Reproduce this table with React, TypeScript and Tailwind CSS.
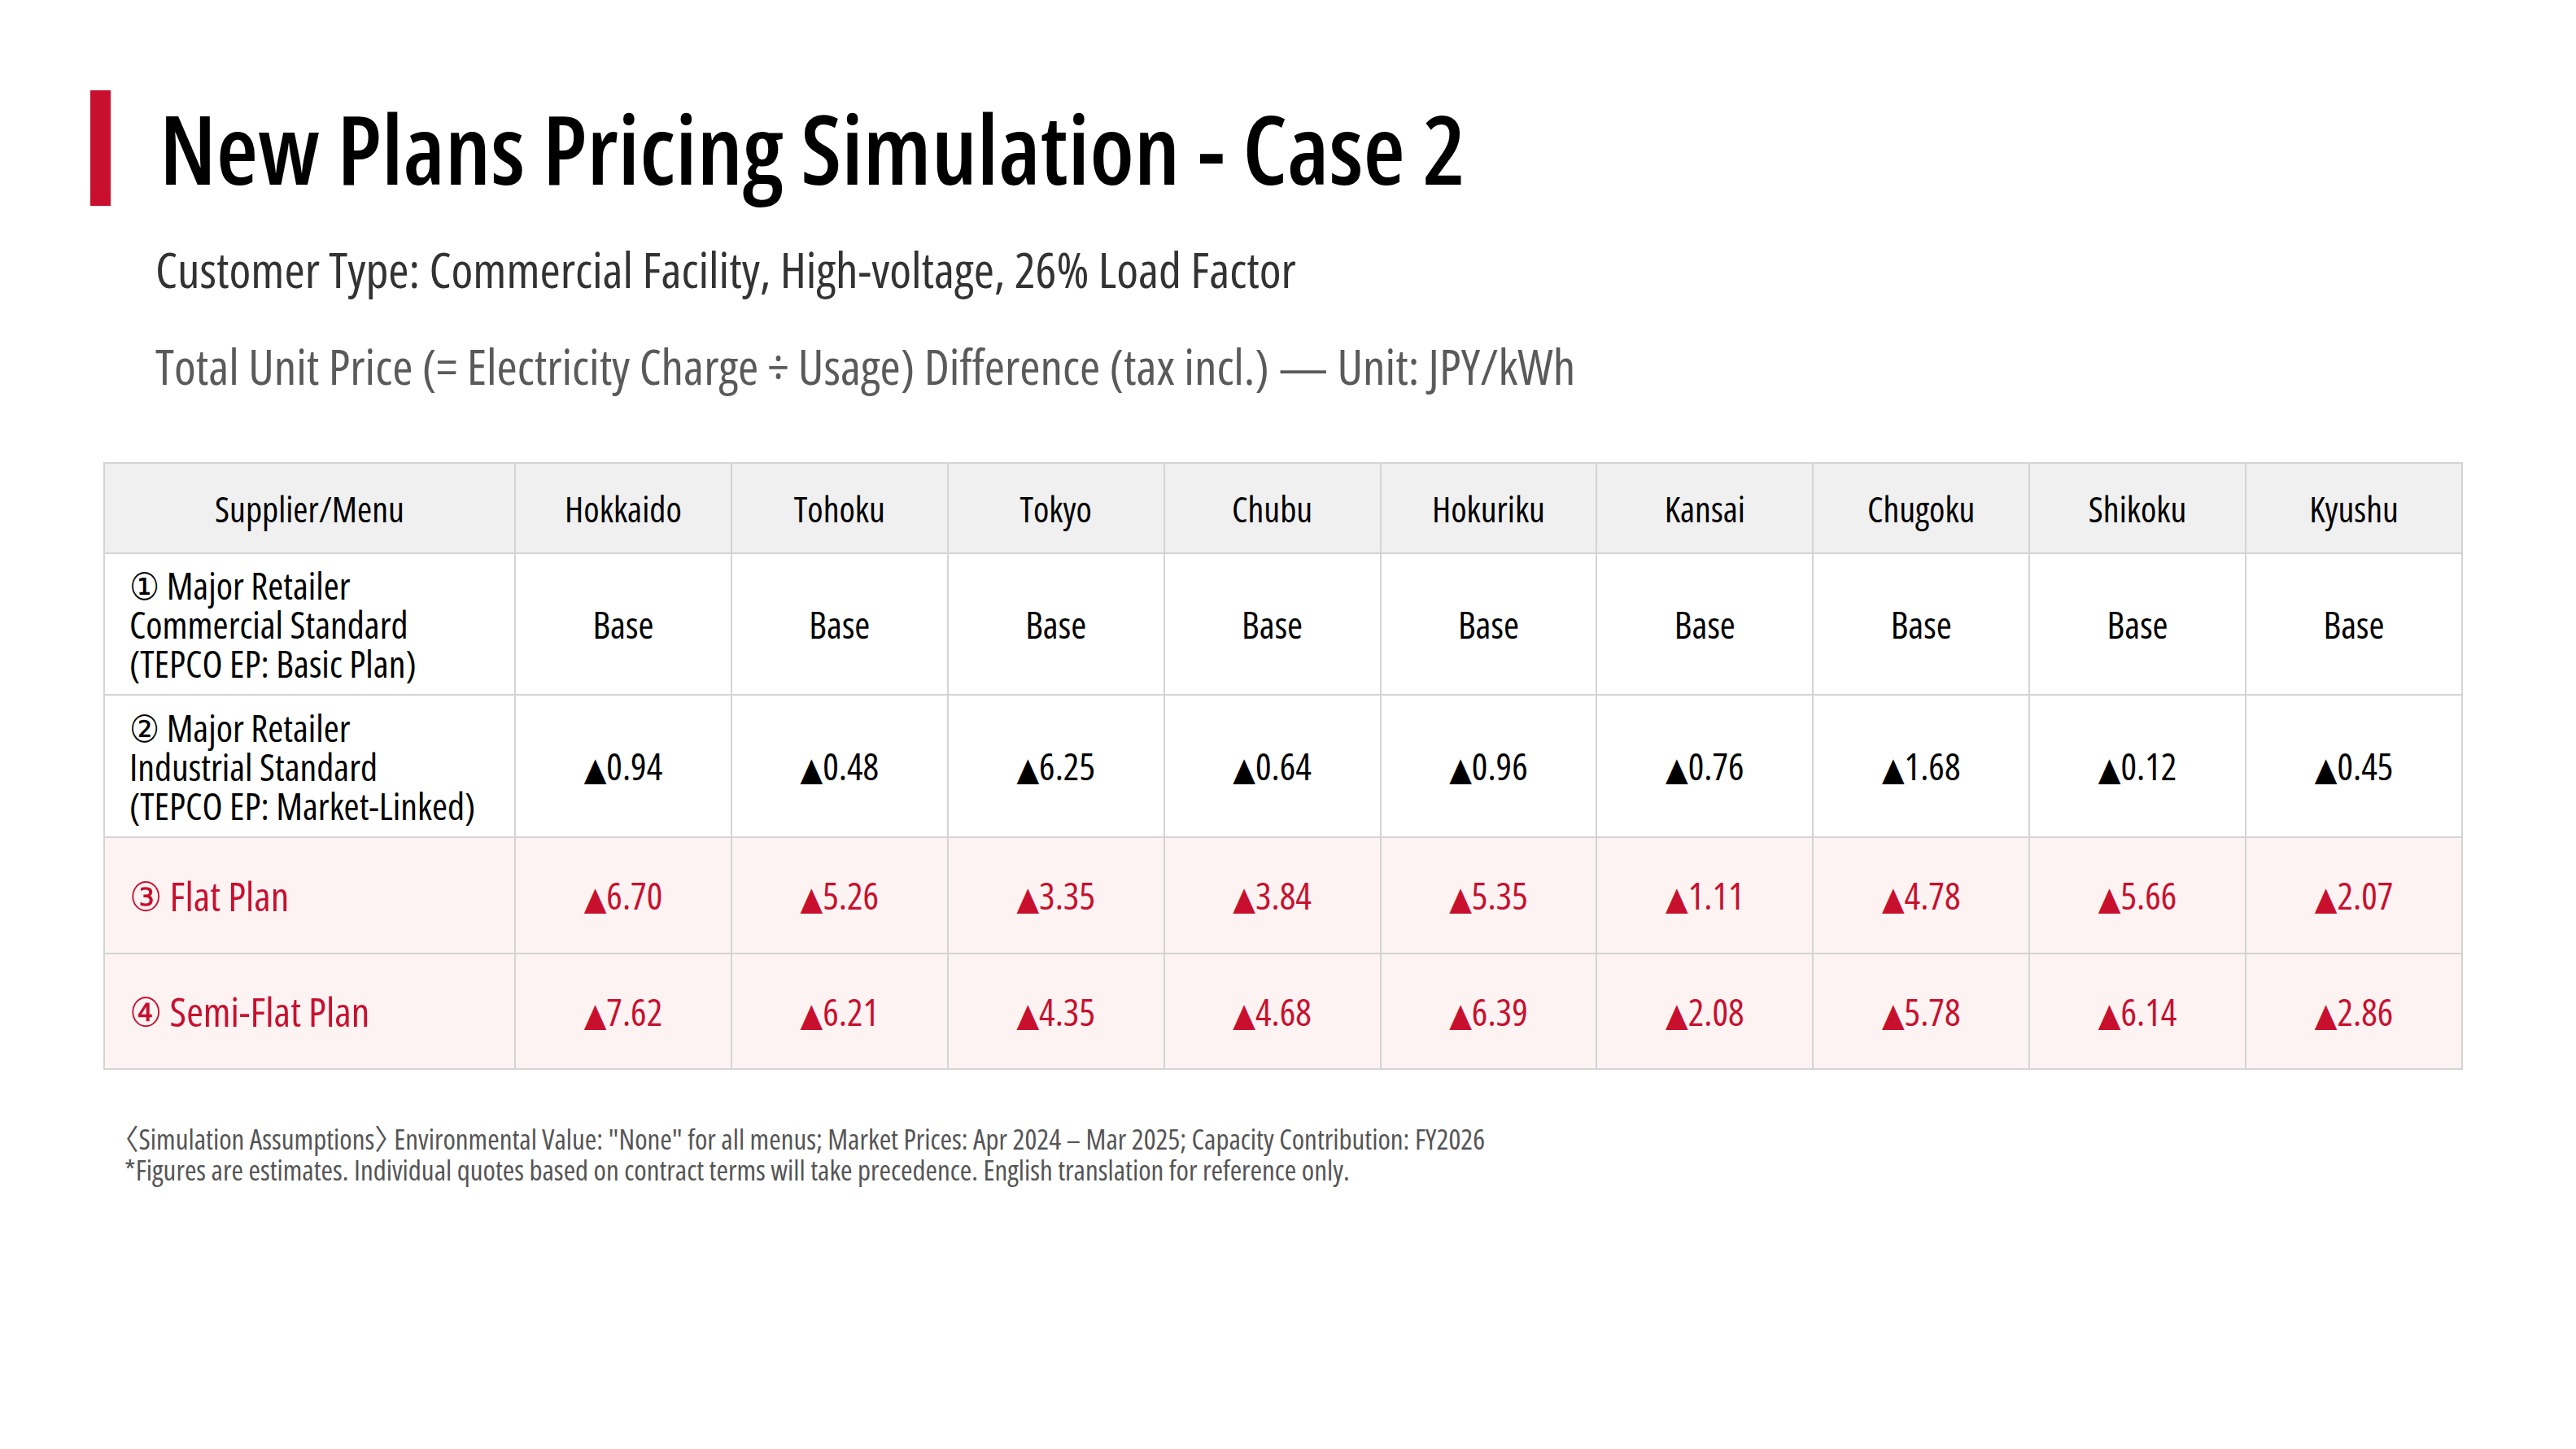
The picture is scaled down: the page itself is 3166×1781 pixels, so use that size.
const FONT = "font-['Open_Sans','DejaVu_Sans','Noto_Sans_CJK_JP',sans-serif] font-stretch-condensed";

type Row = {
  mark: string;
  label: string[];
  values: string[];
  highlight: boolean;
  height: string;
};

const regions = [
  "Hokkaido",
  "Tohoku",
  "Tokyo",
  "Chubu",
  "Hokuriku",
  "Kansai",
  "Chugoku",
  "Shikoku",
  "Kyushu",
];

const rows: Row[] = [
  {
    mark: "①",
    label: ["Major Retailer", "Commercial Standard", "(TEPCO EP: Basic Plan)"],
    values: Array(9).fill("Base"),
    highlight: false,
    height: "h-[174px]",
  },
  {
    mark: "②",
    label: ["Major Retailer", "Industrial Standard", "(TEPCO EP: Market-Linked)"],
    values: ["▲0.94", "▲0.48", "▲6.25", "▲0.64", "▲0.96", "▲0.76", "▲1.68", "▲0.12", "▲0.45"],
    highlight: false,
    height: "h-[175px]",
  },
  {
    mark: "③",
    label: ["Flat Plan"],
    values: ["▲6.70", "▲5.26", "▲3.35", "▲3.84", "▲5.35", "▲1.11", "▲4.78", "▲5.66", "▲2.07"],
    highlight: true,
    height: "h-[143px]",
  },
  {
    mark: "④",
    label: ["Semi-Flat Plan"],
    values: ["▲7.62", "▲6.21", "▲4.35", "▲4.68", "▲6.39", "▲2.08", "▲5.78", "▲6.14", "▲2.86"],
    highlight: true,
    height: "h-[142px]",
  },
];

// The delta mark is a slightly larger glyph than the digits that follow it.
function Value({ text }: { text: string }) {
  if (text.startsWith("▲")) {
    return (
      <span>
        <span className="text-[40px]">▲</span>
        {text.slice(1)}
      </span>
    );
  }
  return <span>{text}</span>;
}

export default function App() {
  return (
    <div className={`h-[1781px] w-[3166px] bg-white ${FONT}`}>
      <div className="flex items-center gap-[60px] pl-[111px] pt-[111px]">
        <div className="h-[142px] w-[25px] shrink-0 bg-[#c8102e]" />
        <h1 className="text-[118px] font-semibold leading-none text-black">
          New Plans Pricing Simulation - Case 2
        </h1>
      </div>

      <div className="pl-[191px] pt-[38px]">
        <p className="text-[61px] leading-[80px] text-[#333333]">
          Customer Type: Commercial Facility, High-voltage, 26% Load Factor
        </p>
        <p className="mt-[39px] text-[61px] leading-[80px] text-[#5a5a5a]">
          Total Unit Price (= Electricity Charge ÷ Usage) Difference (tax incl.) — Unit: JPY/kWh
        </p>
      </div>

      <div className="pl-[127px] pt-[78px]">
        <table className="w-[2900px] table-fixed border-collapse border-2 border-[#d4d4d4] text-black">
          <colgroup>
            <col className="w-[505px]" />
            {regions.map((r) => (
              <col key={r} />
            ))}
          </colgroup>
          <thead>
            <tr className="h-[111px] bg-[#f0f0f0] text-[44px]">
              <th className="border-2 border-[#d4d4d4] text-center font-normal">
                Supplier/Menu
              </th>
              {regions.map((r) => (
                <th key={r} className="border-2 border-[#d4d4d4] text-center font-normal">
                  {r}
                </th>
              ))}
            </tr>
          </thead>
          <tbody>
            {rows.map((row) => (
              <tr
                key={row.mark}
                className={`${row.height} ${row.highlight ? "bg-[#fdf3f3] text-[#c8102e]" : "bg-white"}`}
              >
                <td
                  className={`border-2 border-[#d4d4d4] pl-[30px] ${
                    row.highlight ? "text-[50px] leading-[60px]" : "text-[46px] leading-[48px]"
                  }`}
                >
                  {row.label.map((line, j) => (
                    <div key={j}>{j === 0 ? `${row.mark} ${line}` : line}</div>
                  ))}
                </td>
                {row.values.map((v, j) => (
                  <td key={j} className="border-2 border-[#d4d4d4] text-center text-[46px]">
                    <Value text={v} />
                  </td>
                ))}
              </tr>
            ))}
          </tbody>
        </table>
      </div>

      <div className="pl-[153px] pt-[66px] text-[35px] leading-[38px] text-[#555555] [font-feature-settings:'halt']">
        <p>〈Simulation Assumptions〉 Environmental Value: "None" for all menus; Market Prices: Apr 2024 – Mar 2025; Capacity Contribution: FY2026</p>
        <p>*Figures are estimates. Individual quotes based on contract terms will take precedence. English translation for reference only.</p>
      </div>
    </div>
  );
}
